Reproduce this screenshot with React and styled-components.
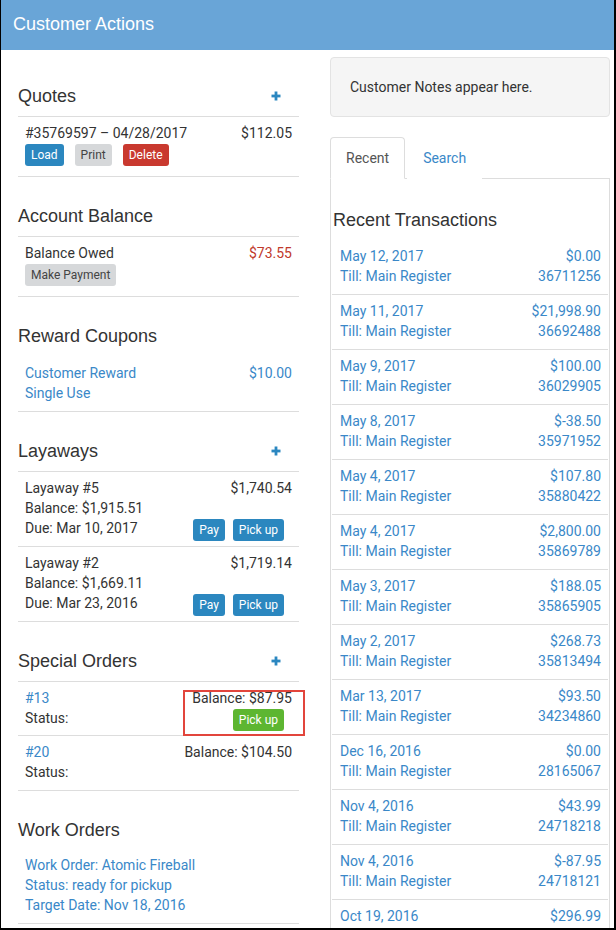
import React from 'react'
import styled, { createGlobalStyle } from 'styled-components'

const GlobalStyle = createGlobalStyle`
    body {
        margin: 0;
        font-family: Roboto, "Liberation Sans", sans-serif;
        background: #fff;
    }
`

const transactions = [
    { date: 'May 12, 2017', amount: '$0.00', id: '36711256' },
    { date: 'May 11, 2017', amount: '$21,998.90', id: '36692488' },
    { date: 'May 9, 2017', amount: '$100.00', id: '36029905' },
    { date: 'May 8, 2017', amount: '$-38.50', id: '35971952' },
    { date: 'May 4, 2017', amount: '$107.80', id: '35880422' },
    { date: 'May 4, 2017', amount: '$2,800.00', id: '35869789' },
    { date: 'May 3, 2017', amount: '$188.05', id: '35865905' },
    { date: 'May 2, 2017', amount: '$268.73', id: '35813494' },
    { date: 'Mar 13, 2017', amount: '$93.50', id: '34234860' },
    { date: 'Dec 16, 2016', amount: '$0.00', id: '28165067' },
    { date: 'Nov 4, 2016', amount: '$43.99', id: '24718218' },
    { date: 'Nov 4, 2016', amount: '$-87.95', id: '24718121' },
    { date: 'Oct 19, 2016', amount: '$296.99', id: '24512760' },
]

function Plus() {
    return (
        <PlusIcon viewBox="0 0 10 10">
            <rect x="3.6" y="0.5" width="2.8" height="9" />
            <rect x="0.5" y="3.6" width="9" height="2.8" />
        </PlusIcon>
    )
}

function App() {
    return (
        <Frame>
            <GlobalStyle />
            <Header>Customer Actions</Header>

            <Columns>
                <LeftColumn>
                    <Section>
                        <SectionHead $line>
                            Quotes
                            <Plus />
                        </SectionHead>
                        <Row $pb={10}>
                            <Col>
                                <span>#35769597 – 04/28/2017</span>
                                <Buttons $gap={11}>
                                    <Btn $kind="primary">Load</Btn>
                                    <Btn $kind="default">Print</Btn>
                                    <Btn $kind="danger">Delete</Btn>
                                </Buttons>
                            </Col>
                            <Col $right>$112.05</Col>
                        </Row>
                    </Section>

                    <Section>
                        <SectionHead $line>Account Balance</SectionHead>
                        <Row $pb={10}>
                            <Col>
                                <span>Balance Owed</span>
                                <Buttons>
                                    <Btn $kind="default">Make Payment</Btn>
                                </Buttons>
                            </Col>
                            <Col $right>
                                <Owed>$73.55</Owed>
                            </Col>
                        </Row>
                    </Section>

                    <Section>
                        <SectionHead>Reward Coupons</SectionHead>
                        <Row $pb={8}>
                            <Col>
                                <Link>Customer Reward</Link>
                                <Link>Single Use</Link>
                            </Col>
                            <Col $right>
                                <Link>$10.00</Link>
                            </Col>
                        </Row>
                    </Section>

                    <Section>
                        <SectionHead $line>
                            Layaways
                            <Plus />
                        </SectionHead>
                        <Row $pb={8}>
                            <Col>
                                <span>Layaway #5</span>
                                <span>Balance: $1,915.51</span>
                                <span>Due: Mar 10, 2017</span>
                            </Col>
                            <Col $right $spread>
                                <span>$1,740.54</span>
                                <Buttons $gap={8} $inset $drop>
                                    <Btn $kind="primary">Pay</Btn>
                                    <Btn $kind="primary">Pick up</Btn>
                                </Buttons>
                            </Col>
                        </Row>
                        <Row $pb={8}>
                            <Col>
                                <span>Layaway #2</span>
                                <span>Balance: $1,669.11</span>
                                <span>Due: Mar 23, 2016</span>
                            </Col>
                            <Col $right $spread>
                                <span>$1,719.14</span>
                                <Buttons $gap={8} $inset $drop>
                                    <Btn $kind="primary">Pay</Btn>
                                    <Btn $kind="primary">Pick up</Btn>
                                </Buttons>
                            </Col>
                        </Row>
                    </Section>

                    <Section>
                        <SectionHead $line>
                            Special Orders
                            <Plus />
                        </SectionHead>
                        <Row $pb={4}>
                            <Col>
                                <Link>#13</Link>
                                <span>Status:</span>
                            </Col>
                            <Col $right>
                                <span>Balance: $87.95</span>
                                <Buttons $inset>
                                    <Btn $kind="success">Pick up</Btn>
                                </Buttons>
                            </Col>
                            <Highlight />
                        </Row>
                        <Row $pb={8}>
                            <Col>
                                <Link>#20</Link>
                                <span>Status:</span>
                            </Col>
                            <Col $right>
                                <span>Balance: $104.50</span>
                            </Col>
                        </Row>
                    </Section>

                    <Section>
                        <SectionHead>Work Orders</SectionHead>
                        <Row $pt={4} $pb={8}>
                            <Col>
                                <Link>Work Order: Atomic Fireball</Link>
                                <Link>Status: ready for pickup</Link>
                                <Link>Target Date: Nov 18, 2016</Link>
                            </Col>
                        </Row>
                    </Section>
                </LeftColumn>

                <RightColumn>
                    <Notes>Customer Notes appear here.</Notes>

                    <TabBar>
                        <Tab $active>Recent</Tab>
                        <Tab>Search</Tab>
                    </TabBar>

                    <Panel>
                        <PanelTitle>Recent Transactions</PanelTitle>
                        {transactions.map((t, i) => (
                            <TxRow key={i}>
                                <TxCol>
                                    <span>{t.date}</span>
                                    <span>Till: Main Register</span>
                                </TxCol>
                                <TxCol $right>
                                    <span>{t.amount}</span>
                                    <span>{t.id}</span>
                                </TxCol>
                            </TxRow>
                        ))}
                    </Panel>
                </RightColumn>
            </Columns>
        </Frame>
    )
}

export default App

const Frame = styled.div`
    width: 616px;
    height: 930px;
    box-sizing: border-box;
    border-left: 1px solid #000;
    border-right: 2px solid #000;
    border-bottom: 2px solid #000;
    overflow: hidden;
    background: #fff;
    color: #333;
    font-size: 14px;
`

const Header = styled.div`
    height: 50px;
    box-sizing: border-box;
    background-color: #69a5d7;
    color: #fff;
    font-family: "Liberation Sans", Arial, sans-serif;
    font-size: 18px;
    display: flex;
    align-items: center;
    padding: 0 0 1px 12px;
`

const Columns = styled.div`
    display: grid;
    grid-template-columns: 281px 280px;
    column-gap: 31px;
    padding-left: 17px;
    align-items: start;
`

const LeftColumn = styled.div`
    padding-top: 26px;
`

const RightColumn = styled.div`
    padding-top: 7px;
`

const Section = styled.section`
    & + & {
        margin-top: 19px;
    }
`

const SectionHead = styled.div`
    height: 40px;
    display: flex;
    align-items: center;
    justify-content: space-between;
    font-family: "Liberation Sans", Arial, sans-serif;
    font-size: 18px;
    color: #333;
    border-bottom: 1px solid ${p => (p.$line ? '#ddd' : 'transparent')};
`

const PlusIcon = styled.svg`
    width: 10px;
    height: 10px;
    margin-right: 18px;
    fill: #2b87c0;
`

const Row = styled.div`
    position: relative;
    display: flex;
    justify-content: space-between;
    padding: ${p => p.$pt ?? 6}px 7px ${p => p.$pb}px;
    border-bottom: 1px solid #ddd;
    line-height: 20px;
`

const Col = styled.div`
    display: flex;
    flex-direction: column;
    align-items: ${p => (p.$right ? 'flex-end' : 'flex-start')};
    justify-content: ${p => (p.$spread ? 'space-between' : 'flex-start')};
`

const Link = styled.span`
    color: #3a88c8;
`

const Owed = styled.span`
    color: #c0392b;
`

const Buttons = styled.div`
    display: flex;
    gap: ${p => p.$gap || 0}px;
    margin-top: 1px;
    margin-right: ${p => (p.$inset ? 8 : 0)}px;
    margin-bottom: ${p => (p.$drop ? -3 : 0)}px;
`

const btnColors = {
    primary: ['#2b87bf', '#fff'],
    default: ['#d6d8da', '#444'],
    danger: ['#c9392f', '#fff'],
    success: ['#5db631', '#fff'],
}

const Btn = styled.button`
    height: 22px;
    padding: 0 6px;
    border: none;
    border-radius: 3px;
    font-family: Roboto, sans-serif;
    font-size: 12px;
    line-height: 22px;
    background: ${p => btnColors[p.$kind][0]};
    color: ${p => btnColors[p.$kind][1]};
`

const Highlight = styled.div`
    position: absolute;
    left: 165px;
    right: -6px;
    top: 8px;
    bottom: -1px;
    border: 2px solid #e2453c;
    pointer-events: none;
`

const Notes = styled.div`
    border: 1px solid #e3e3e3;
    border-radius: 4px;
    background: #f5f5f5;
    padding: 19px;
    line-height: 20px;
    color: #333;
`

const TabBar = styled.div`
    display: flex;
    margin-top: 20px;
    border-bottom: 1px solid #ddd;
`

const Tab = styled.div`
    padding: 10px 15px;
    margin-right: 2px;
    margin-bottom: -1px;
    line-height: 20px;
    border: 1px solid ${p => (p.$active ? '#ddd' : 'transparent')};
    border-bottom-color: ${p => (p.$active ? '#fff' : 'transparent')};
    border-radius: 4px 4px 0 0;
    background: #fff;
    color: ${p => (p.$active ? '#555' : '#3a88c8')};
`

const Panel = styled.div`
    border: 1px solid #ddd;
    border-top: none;
    padding: 31px 1px 0;
`

const PanelTitle = styled.div`
    margin: 0 0 10px 1px;
    font-family: "Liberation Sans", Arial, sans-serif;
    font-size: 18px;
    line-height: 20px;
    color: #333;
`

const TxRow = styled.div`
    display: flex;
    justify-content: space-between;
    padding: 6px 7px 8px 8px;
    border-bottom: 1px solid #ddd;
    line-height: 20px;
    color: #3a88c8;
`

const TxCol = styled.div`
    display: flex;
    flex-direction: column;
    align-items: ${p => (p.$right ? 'flex-end' : 'flex-start')};
`
